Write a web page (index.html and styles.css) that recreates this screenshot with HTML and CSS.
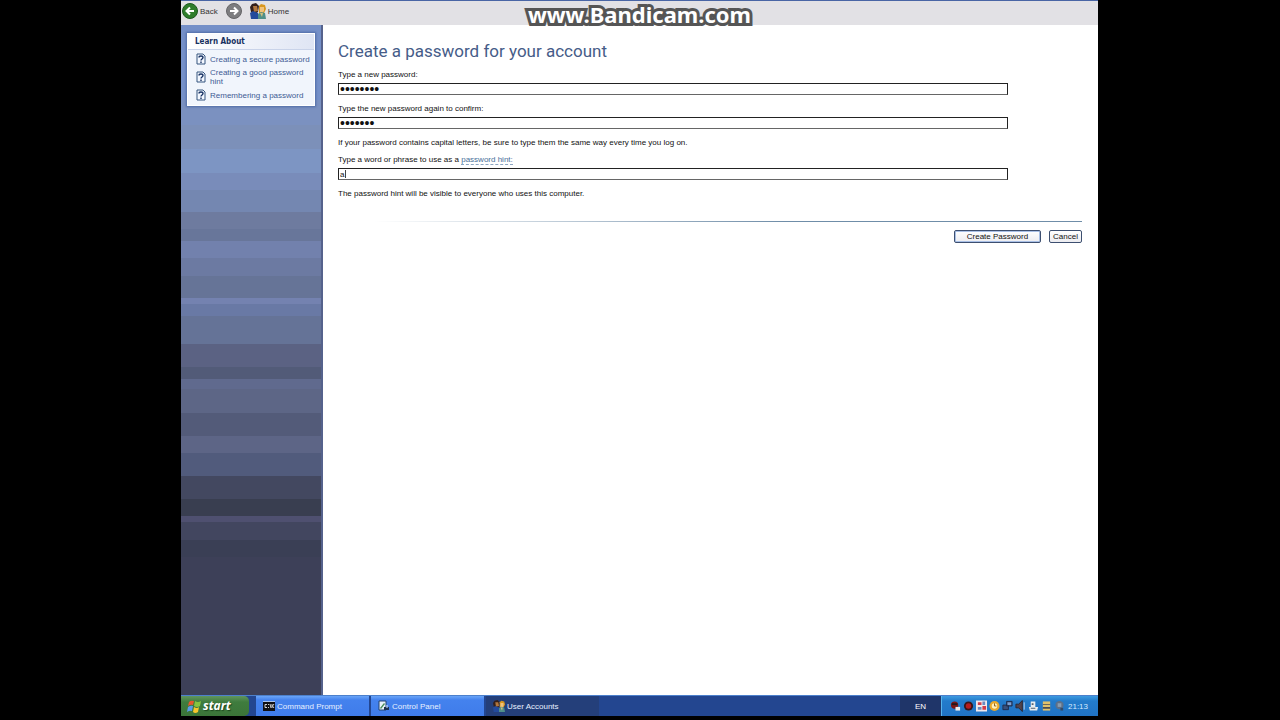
FILE: index.html
```html
<!DOCTYPE html>
<html lang="en">
<head>
<meta charset="utf-8">
<title>User Accounts</title>
<link rel="stylesheet" href="styles.css">
</head>
<body>
<svg class="defs" aria-hidden="true">
  <symbol id="users" viewBox="0 0 16 16">
    <path d="M0 4 2 1 6 0 9 3 8 9 5 11 1 9Z" fill="#33201c"/>
    <path d="M3 3 7 3 8 8 4 9Z" fill="#b0763f"/>
    <path d="M0 10 3 8 8 10 9 16H1Z" fill="#234a9c"/>
    <path d="M9 3 11 1l4 1 1 4-2 4H9Z" fill="#d9971f"/>
    <path d="M10 4h4v4l-2 2-2-1z" fill="#f0c27c"/>
    <path d="M8 11 11 9l4 1 1 6H8Z" fill="#4f8f8a"/>
    <path d="M10 10h3l-1 4z" fill="#d6c07a"/>
  </symbol>
  <symbol id="help" viewBox="0 0 10 12">
    <path d="M1 1h6l2 2v8H1Z" fill="#f4f8ff" stroke="#35557f"/>
    <path d="M3 4.500C3 2.500 7 2.500 7 4.500 7 6 5 6 5 7.500M5 8.500v1.500" fill="none" stroke="#183264" stroke-width="1.400"/>
  </symbol>
</svg>
<div class="desktop">
  <header class="toolbar">
    <button class="tool back" type="button">
      <svg class="arrow" viewBox="0 0 16 16"><circle cx="8" cy="8" r="7.500" fill="#2f7d2c" stroke="#1d5a20"/><path d="M12 8H5M8 4.500 4.500 8 8 11.500" fill="none" stroke="#fff" stroke-width="2"/></svg>
      Back
    </button>
    <button class="tool forward" type="button" aria-label="Forward">
      <svg class="arrow" viewBox="0 0 16 16"><circle cx="8" cy="8" r="7.500" fill="#7d7d80" stroke="#656568"/><path d="M4 8h7M8 4.500 11.500 8 8 11.500" fill="none" stroke="#fff" stroke-width="2"/></svg>
    </button>
    <button class="tool" type="button">
      <svg class="arrow" viewBox="0 0 16 16"><use href="#users"/></svg>
      Home
    </button>
  </header>
  <div class="window">
    <aside class="sidebar">
      <nav class="learn">
        <h2 class="learn-title">Learn About</h2>
        <ul class="learn-list">
          <li class="learn-item"><svg class="help"><use href="#help"/></svg><a class="learn-link" href="#">Creating a secure password</a></li>
          <li class="learn-item"><svg class="help"><use href="#help"/></svg><a class="learn-link" href="#">Creating a good password hint</a></li>
          <li class="learn-item"><svg class="help"><use href="#help"/></svg><a class="learn-link" href="#">Remembering a password</a></li>
        </ul>
      </nav>
    </aside>
    <main class="content">
      <h1 class="title">Create a password for your account</h1>
      <form class="form">
        <label class="text" for="pw">Type a new password:</label>
        <input class="field secret" id="pw" type="password" value="password">
        <label class="text" for="confirm">Type the new password again to confirm:</label>
        <input class="field secret" id="confirm" type="password" value="passwor">
        <p class="text note">If your password contains capital letters, be sure to type them the same way every time you log on.</p>
        <div class="text"><label for="hint">Type a word or phrase to use as a</label> <a class="hint-link" href="#">password hint:</a></div>
        <input class="field active" id="hint" type="text" value="a">
        <p class="text">The password hint will be visible to everyone who uses this computer.</p>
        <div class="actions">
          <button class="button primary" type="button">Create Password</button>
          <button class="button" type="button">Cancel</button>
        </div>
      </form>
    </main>
  </div>
  <footer class="taskbar">
    <button class="start" type="button">
      <svg class="flag" viewBox="0 0 14 14"><path d="M2 3q2-2 5-1L6 6Q4 5 1 7Z" fill="#e8562d"/><path d="M8 2q3 2 6 0l-1 5q-3 2-6 0Z" fill="#86c440"/><path d="M1 8q3-2 5-1l-1 5q-2-1-5 1Z" fill="#5a9bea"/><path d="M7 8q3 2 5 0l-1 5q-3 2-5 0Z" fill="#f6c62c"/></svg>
      start
    </button>
    <div class="tasks">
      <button class="task" type="button"><svg class="task-icon" viewBox="0 0 12 12"><path d="M0 1h12v10H0z" fill="#101014"/><path d="M0 1h12v1H0z" fill="#a9c3ee"/><path d="M4 4.500H2v3h2M5.500 4v1M5.500 7v1M7 4l1 4M9 4v4M11 4 9.500 6 11 8" fill="none" stroke="#fff" stroke-width=".8"/></svg>Command Prompt</button>
      <button class="task" type="button"><svg class="task-icon" viewBox="0 0 12 12"><path d="M1 1h7v9H1z" fill="#e8f2fc" stroke="#23426e"/><path d="M2 8 6 3l1 1-4 5z" fill="#4a8e58"/><path d="M6 7h5v3H6z" fill="#1d3352"/><path d="M9 5v3" stroke="#e0eafa"/></svg>Control Panel</button>
      <button class="task current" type="button"><svg class="task-icon" viewBox="0 0 16 16"><use href="#users"/></svg>User Accounts</button>
    </div>
    <span class="lang">EN</span>
    <div class="tray">
      <svg class="tray-icon" viewBox="0 0 12 12"><circle cx="5" cy="5" r="4" fill="#7a1717"/><path d="M2 3h6v2H2z" fill="#23191c"/><path d="M6 7h5v4H6z" fill="#f0eeee"/></svg>
      <svg class="tray-icon" viewBox="0 0 12 12"><circle cx="6" cy="6" r="5" fill="#3a1519"/><circle cx="6" cy="6" r="3" fill="#b71c1e"/></svg>
      <svg class="tray-icon" viewBox="0 0 12 12"><path d="M0 0h12v12H0z" fill="#f2e9ec"/><path d="M2 2h4v3H2zM7 6h4v4H7z" fill="#d23c4a"/><path d="M7 1h3v4H7zM2 7h4v3H2z" fill="#6b8bc0"/></svg>
      <svg class="tray-icon" viewBox="0 0 12 12"><circle cx="6" cy="6" r="5.500" fill="#e9a92b"/><circle cx="6" cy="6" r="3" fill="#fff1bd"/><path d="M6 3v3h2" stroke="#8a5a10" fill="none"/></svg>
      <svg class="tray-icon" viewBox="0 0 12 12"><path d="M5 1h6v5H5zM1 5h6v5H1z" fill="#39507c" stroke="#1d2c4c"/><path d="M6 2h4v3H6z" fill="#7f9fd0"/></svg>
      <svg class="tray-icon" viewBox="0 0 12 12"><path d="M1 4h3l4-4v12L4 8H1z" fill="#51434b" stroke="#2b2530"/><path d="M10 2v8" stroke="#c4d8ee"/></svg>
      <svg class="tray-icon" viewBox="0 0 12 12"><path d="M3 1h5v6h3l-1 4H2L1 7h2z" fill="#e7edf0"/><path d="M4 3h2v2H4zM3 8h5v1H3z" fill="#54616d"/></svg>
      <svg class="tray-icon" viewBox="0 0 12 12"><path d="M2 1h8v10H2z" fill="#e0c069"/><path d="M2 4h8v1H2zM2 7h8v2H2z" fill="#484c54"/></svg>
      <svg class="tray-icon" viewBox="0 0 12 12"><circle cx="6" cy="5" r="4.500" fill="#5d7088"/><path d="M4 3h4v4H4z" fill="#8a9db0"/><path d="M7 8h3v3H7z" fill="#344b68"/></svg>
      <time class="clock">21:13</time>
    </div>
  </footer>
  <div class="watermark">www.Bandicam.com</div>
</div>
</body>
</html>
```

FILE: styles.css
```css
* { box-sizing: border-box; }
body {
  margin: 0;
  background: #000;
  font-family: "Liberation Sans", Arial, sans-serif;
  font-size: 8px;
  line-height: 9px;
  color: #111;
}
h1, h2, p, ul { margin: 0; padding: 0; }
button, input { font: inherit; color: inherit; }
button { display: flex; align-items: center; border: 0; padding: 0; background: none; }
.defs { display: none; }
.desktop {
  position: relative;
  display: flex;
  flex-direction: column;
  min-height: 100vh;
  margin: 0 182px 0 181px;
  padding-bottom: 4px;
}
.toolbar {
  display: flex;
  align-items: center;
  gap: 8px;
  height: 25px;
  padding-bottom: 4px;
  padding-left: 1px;
  border-top: 1px solid #4965a5;
  background: #e2e1e5;
  color: #333;
}
.tool { gap: 2px; }
.arrow { width: 16px; height: 16px; }
.window { display: flex; flex: 1; background: #fff; }
.sidebar {
  width: 142px;
  padding: 8px 6px 0 6px;
  border-right: 2px solid #55628c;
  background: linear-gradient(
    #7590c8 0 75px, #7b91c0 75px 100px, #7c90b9 100px 124px,
    #7d95c3 124px 148px, #798cba 148px 165px, #7487b1 165px 187px,
    #6e7b9f 187px 204px, #68769a 204px 216px, #7281ad 216px 233px,
    #6c7aa2 233px 251px, #667497 251px 273px, #7482b0 273px 279px,
    #6979a5 279px 291px, #657397 291px 319px, #5b6283 319px 342px,
    #525b78 342px 354px, #606a8e 354px 364px, #5d6686 364px 388px,
    #535b79 388px 411px, #5d6586 411px 428px, #515b7c 428px 451px,
    #434860 451px 474px, #393e50 474px 491px, #4f5070 491px 497px,
    #42465f 497px 515px, #3a3f55 515px 532px, #3d4058 532px);
}
.learn { background: #f1f5fc; border: 1px solid #fff; box-shadow: 0 0 2px 1px #506ba6; }
.learn-title {
  padding: 3px 7px;
  border-bottom: 1px solid #c9d3e9;
  background: linear-gradient(90deg, #fff, #dfe5f4);
  color: #17305f;
  font-family: "DejaVu Sans Condensed", "DejaVu Sans", sans-serif;
  font-size: 8px;
  line-height: 9px;
}
.learn-list { display: flex; flex-direction: column; gap: 3px; padding: 3px 2px 4px 8px; list-style: none; }
.learn-item { display: flex; align-items: center; gap: 4px; }
.help { flex: none; width: 10px; height: 12px; }
.learn-link { color: #3e5b94; text-decoration: none; }
.content { flex: 1; padding: 16px 16px 16px 15px; }
.title {
  color: #465c88;
  font-family: Roboto, sans-serif;
  font-size: 17px;
  font-weight: 400;
  line-height: 20px;
}
.form { display: flex; flex-direction: column; padding-top: 9px; }
.text { display: block; line-height: 10px; }
.note { margin-bottom: 7px; }
.field {
  width: 90%;
  height: 12px;
  margin: 3px 0 9px;
  padding: 0 1px;
  border: 1px solid #222;
  border-bottom-color: #666;
  border-radius: 0;
  background: #fff;
}
.secret { font-family: "Liberation Sans", sans-serif; font-size: 14px; line-height: 10px; }
.active { background: linear-gradient(#444, #444) 6px 1px / 1px 8px no-repeat #fff; }
.hint-link { color: #48709a; text-decoration: none; border-bottom: 1px dashed #8ba5c2; }
.actions {
  display: flex;
  justify-content: flex-end;
  gap: 8px;
  margin-top: 22px;
  padding-top: 8px;
  border-top: 1px solid;
  border-image: linear-gradient(90deg, #fff 5%, #6f8da8 60%) 1;
}
.button {
  height: 13px;
  padding: 0 3px;
  border: 1px solid #3d4f70;
  border-radius: 2px;
  background: linear-gradient(#fff, #ececf0);
}
.primary { padding: 0 12px; box-shadow: inset 0 0 0 1px #a9c0e6; }
.taskbar { display: flex; height: 21px; border-top: 1px solid #4c80cc; background: #234690; color: #fff; }
.start {
  width: 68px;
  padding-left: 6px;
  gap: 2px;
  border-radius: 0 5px 5px 0;
  background: linear-gradient(#60955d, #3f7c3e 30%, #3b7538);
  color: #fff;
  font: italic bold 12px/14px "Open Sans", sans-serif;
  text-shadow: 1px 1px 1px #1d451d;
}
.flag { width: 14px; height: 14px; }
.tasks { display: flex; flex: 1; gap: 2px; padding-left: 7px; }
.task { width: 113px; padding-left: 7px; gap: 2px; background: linear-gradient(#6aa5f8, #4482ee 20%, #3f7cea); color: #e6efff; }
.task-icon { width: 12px; height: 12px; }
.current { background: #243f7a; }
.lang { display: flex; align-items: center; padding: 0 15px; background: #1f3569; }
.tray { display: flex; align-items: center; gap: 2px; width: 157px; padding-left: 8px; border-left: 1px solid #58b4ec; background: linear-gradient(#3e9be0, #237bcb 25%, #2073c4); }
.tray-icon { width: 11px; height: 12px; }
.clock { flex: 1; padding-left: 1px; color: #d4eaff; }
.watermark {
  position: absolute;
  top: 1px;
  left: 0;
  right: 0;
  text-align: center;
  color: #fff;
  font: bold 22px/27px "Noto Sans", sans-serif;
  -webkit-text-stroke: 6px #555;
  paint-order: stroke fill;
}
```
